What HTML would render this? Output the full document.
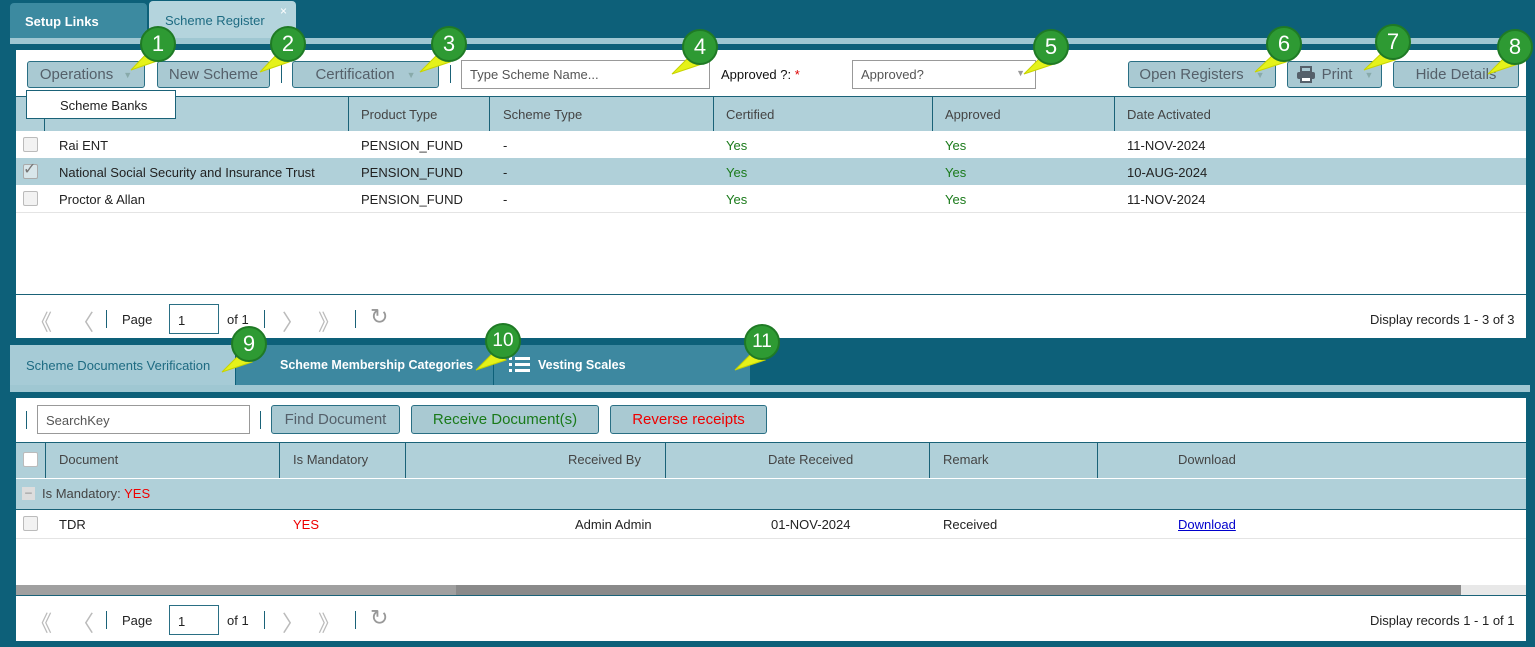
<!DOCTYPE html>
<html><head><meta charset="utf-8">
<style>
*{box-sizing:border-box;margin:0;padding:0}
body{width:1535px;height:647px;overflow:hidden;background:#0d6079;font-family:"Liberation Sans",sans-serif;font-size:13px;color:#222;position:relative}
.a{position:absolute}
.btn{position:absolute;border:1px solid #2a6f84;border-radius:3px;background:#a9c9d2;color:#55606a;font-size:15px;display:flex;align-items:center;justify-content:center;height:27px}
.hd{position:absolute;color:#444;font-size:13px}
.vl{position:absolute;width:1px;background:#1a6278}
.mk{position:absolute;width:36px;height:36px;border-radius:50%;background:#2e9a33;border:2px solid #1f7a25;color:#fff;font-size:22px;display:flex;align-items:center;justify-content:center;font-family:"Liberation Sans",sans-serif}
.cb{position:absolute;width:15px;height:15px;border:1px solid #bbb;border-radius:2px;background:#f2f2f2}
.sep{position:absolute;width:1px;height:18px;background:#1a6278}
.pg{position:absolute;color:#bbb;font-size:22px}
</style></head><body>
<div class="a" style="left:10px;top:3px;width:137px;height:36px;background:#3c8aa0;border-radius:4px 4px 0 0;color:#fff;font-weight:bold;font-size:13px;padding:11px 0 0 15px">Setup Links</div>
<div class="a" style="left:149px;top:1px;width:147px;height:38px;background:#b4d4dd;border-radius:4px 4px 0 0;color:#1e6b82;font-size:13px;padding:12px 0 0 16px">Scheme Register</div>
<div class="a" style="left:280px;top:4px;color:#fff;font-size:12px">×</div>
<div class="a" style="left:10px;top:38px;width:1520px;height:6px;background:#9fc7d2"></div>
<div class="a" style="left:10px;top:44px;width:1521px;height:299px;background:#0d6079"></div>
<div class="a" style="left:16px;top:50px;width:1510px;height:288px;background:#fff"></div>
<div class="btn" style="left:27px;top:61px;width:118px">Operations <span style="font-size:9px;margin-left:10px;color:#8aa">▼</span></div>
<div class="btn" style="left:157px;top:61px;width:113px">New Scheme</div>
<div class="sep" style="left:281px;top:65px"></div>
<div class="btn" style="left:292px;top:61px;width:147px">Certification <span style="font-size:9px;margin-left:12px;color:#8aa">▼</span></div>
<div class="sep" style="left:450px;top:65px"></div>
<div class="a" style="left:461px;top:60px;width:249px;height:29px;border:1px solid #999;font-size:13px;color:#555;padding:6px 8px">Type Scheme Name...</div>
<div class="a" style="left:721px;top:67px;font-size:13px;color:#111">Approved ?: <span style="color:#d00">*</span></div>
<div class="a" style="left:852px;top:60px;width:184px;height:29px;border:1px solid #999;font-size:13px;color:#555;padding:6px 8px">Approved?<span style="position:absolute;right:10px;top:7px;font-size:9px;color:#999">▼</span></div>
<div class="btn" style="left:1128px;top:61px;width:148px">Open Registers <span style="font-size:9px;margin-left:12px;color:#8aa">▼</span></div>
<div class="btn" style="left:1287px;top:61px;width:95px"><svg width="20" height="17" viewBox="0 0 20 17" style="margin-right:6px"><rect x="5" y="1" width="10" height="5" fill="none" stroke="#55606a" stroke-width="2"/><rect x="1" y="6" width="18" height="7" rx="2" fill="#55606a"/><rect x="5" y="11" width="10" height="5" fill="#fff" stroke="#55606a" stroke-width="2"/></svg>Print <span style="font-size:9px;margin-left:12px;color:#8aa">▼</span></div>
<div class="btn" style="left:1393px;top:61px;width:126px">Hide Details</div>
<div class="a" style="left:16px;top:96px;width:1510px;height:35px;background:#b0d0d9;border-top:1px solid #1a6278"></div>
<div class="vl" style="left:44px;top:97px;height:34px"></div>
<div class="vl" style="left:348px;top:97px;height:34px"></div>
<div class="vl" style="left:489px;top:97px;height:34px"></div>
<div class="vl" style="left:713px;top:97px;height:34px"></div>
<div class="vl" style="left:932px;top:97px;height:34px"></div>
<div class="vl" style="left:1114px;top:97px;height:34px"></div>
<div class="hd" style="left:361px;top:107px">Product Type</div>
<div class="hd" style="left:503px;top:107px">Scheme Type</div>
<div class="hd" style="left:726px;top:107px">Certified</div>
<div class="hd" style="left:945px;top:107px">Approved</div>
<div class="hd" style="left:1127px;top:107px">Date Activated</div>
<div class="a" style="left:26px;top:90px;width:150px;height:29px;background:#fff;border:1px solid #1a6278;font-size:13px;padding:7px 0 0 33px">Scheme Banks</div>
<div class="a" style="left:16px;top:158px;width:1510px;height:27px;background:#b0d0d9"></div>
<div class="a" style="left:16px;top:212px;width:1510px;height:1px;background:#e4e4e4"></div>
<div class="cb" style="left:23px;top:137px"></div><div class="cb" style="left:23px;top:164px;background:#d8e6ea;border-color:#aaa"></div><div class="a" style="left:23px;top:159px;font-size:16px;color:#777">✓</div><div class="cb" style="left:23px;top:191px"></div>
<div class="a" style="left:59px;top:138px">Rai ENT</div>
<div class="a" style="left:59px;top:165px">National Social Security and Insurance Trust</div>
<div class="a" style="left:59px;top:192px">Proctor &amp; Allan</div>
<div class="a" style="left:361px;top:138px">PENSION_FUND</div><div class="a" style="left:361px;top:165px">PENSION_FUND</div><div class="a" style="left:361px;top:192px">PENSION_FUND</div>
<div class="a" style="left:503px;top:138px">-</div><div class="a" style="left:503px;top:165px">-</div><div class="a" style="left:503px;top:192px">-</div>
<div class="a" style="left:726px;top:138px;color:#1a7a1a">Yes</div><div class="a" style="left:726px;top:165px;color:#1a7a1a">Yes</div><div class="a" style="left:726px;top:192px;color:#1a7a1a">Yes</div>
<div class="a" style="left:945px;top:138px;color:#1a7a1a">Yes</div><div class="a" style="left:945px;top:165px;color:#1a7a1a">Yes</div><div class="a" style="left:945px;top:192px;color:#1a7a1a">Yes</div>
<div class="a" style="left:1127px;top:138px">11-NOV-2024</div><div class="a" style="left:1127px;top:165px">10-AUG-2024</div><div class="a" style="left:1127px;top:192px">11-NOV-2024</div>
<div class="a" style="left:16px;top:294px;width:1510px;height:1px;background:#1a6278"></div>
<div class="pg" style="left:30px;top:305px">《</div><div class="pg" style="left:72px;top:305px">〈</div>
<div class="sep" style="left:106px;top:310px"></div>
<div class="a" style="left:122px;top:312px">Page</div>
<div class="a" style="left:169px;top:304px;width:50px;height:30px;border:1px solid #2a6f84;padding:8px 0 0 8px">1</div>
<div class="a" style="left:227px;top:312px">of 1</div>
<div class="sep" style="left:264px;top:310px"></div>
<div class="pg" style="left:282px;top:305px">〉</div><div class="pg" style="left:318px;top:305px">》</div>
<div class="sep" style="left:355px;top:310px"></div>
<div class="pg" style="left:370px;top:304px;color:#999">↻</div>
<div class="a" style="left:1370px;top:312px">Display records 1 - 3 of 3</div>
<div class="a" style="left:10px;top:345px;width:225px;height:40px;background:#a6cbd6;color:#1e6b82;font-size:13px;padding:13px 0 0 16px">Scheme Documents Verification</div>
<div class="a" style="left:235px;top:345px;width:258px;height:40px;background:#3d88a0;border-left:1px solid #0d6079;color:#fff;font-weight:bold;font-size:12.5px;padding:13px 0 0 44px">Scheme Membership Categories</div>
<div class="a" style="left:493px;top:345px;width:257px;height:40px;background:#3d88a0;border-left:1px solid #0d6079;color:#fff;font-weight:bold;font-size:12.5px;padding:13px 0 0 44px">Vesting Scales</div>
<svg class="a" style="left:509px;top:356px" width="22" height="18"><g fill="#fff"><rect x="0" y="1" width="3" height="3"/><rect x="0" y="7" width="3" height="3"/><rect x="0" y="13" width="3" height="3"/><rect x="6" y="1" width="15" height="3"/><rect x="6" y="7" width="15" height="3"/><rect x="6" y="13" width="15" height="3"/></g></svg>
<div class="a" style="left:10px;top:385px;width:1520px;height:7px;background:#9fc7d2"></div>
<div class="a" style="left:16px;top:398px;width:1510px;height:243px;background:#fff"></div>
<div class="sep" style="left:26px;top:411px"></div>
<div class="a" style="left:37px;top:405px;width:213px;height:29px;border:1px solid #999;font-size:13px;color:#555;padding:7px 8px">SearchKey</div>
<div class="sep" style="left:260px;top:411px"></div>
<div class="btn" style="left:271px;top:405px;width:129px;height:29px">Find Document</div>
<div class="btn" style="left:411px;top:405px;width:188px;height:29px;color:#1a7a1a">Receive Document(s)</div>
<div class="btn" style="left:610px;top:405px;width:157px;height:29px;color:#e00">Reverse receipts</div>
<div class="a" style="left:16px;top:442px;width:1510px;height:68px;background:#b0d0d9;border-top:1px solid #1a6278;border-bottom:1px solid #1a6278"></div>
<div class="a" style="left:16px;top:478px;width:1510px;height:1px;background:#fff"></div>
<div class="vl" style="left:45px;top:443px;height:35px"></div>
<div class="vl" style="left:279px;top:443px;height:35px"></div>
<div class="vl" style="left:405px;top:443px;height:35px"></div>
<div class="vl" style="left:665px;top:443px;height:35px"></div>
<div class="vl" style="left:929px;top:443px;height:35px"></div>
<div class="vl" style="left:1097px;top:443px;height:35px"></div>
<div class="cb" style="left:23px;top:452px;background:#fff"></div>
<div class="hd" style="left:59px;top:452px">Document</div>
<div class="hd" style="left:293px;top:452px">Is Mandatory</div>
<div class="hd" style="left:568px;top:452px">Received By</div>
<div class="hd" style="left:768px;top:452px">Date Received</div>
<div class="hd" style="left:943px;top:452px">Remark</div>
<div class="hd" style="left:1178px;top:452px">Download</div>
<div class="a" style="left:22px;top:487px;width:13px;height:13px;background:#ddd;color:#888;font-size:12px;line-height:11px;text-align:center">–</div>
<div class="a" style="left:42px;top:486px;color:#444">Is Mandatory: <span style="color:#e00">YES</span></div>
<div class="cb" style="left:23px;top:516px"></div>
<div class="a" style="left:59px;top:517px">TDR</div>
<div class="a" style="left:293px;top:517px;color:#e00">YES</div>
<div class="a" style="left:575px;top:517px">Admin Admin</div>
<div class="a" style="left:771px;top:517px">01-NOV-2024</div>
<div class="a" style="left:943px;top:517px">Received</div>
<div class="a" style="left:1178px;top:517px;color:#00c;text-decoration:underline">Download</div>
<div class="a" style="left:16px;top:538px;width:1510px;height:1px;background:#e4e4e4"></div>
<div class="a" style="left:16px;top:585px;width:1445px;height:10px;background:#8a8a8a"></div>
<div class="a" style="left:16px;top:585px;width:440px;height:10px;background:#a0a0a0"></div>
<div class="a" style="left:1461px;top:585px;width:65px;height:10px;background:#e8e8e8"></div>
<div class="a" style="left:16px;top:595px;width:1510px;height:1px;background:#1a6278"></div>
<div class="pg" style="left:30px;top:606px">《</div><div class="pg" style="left:72px;top:606px">〈</div>
<div class="sep" style="left:106px;top:611px"></div>
<div class="a" style="left:122px;top:613px">Page</div>
<div class="a" style="left:169px;top:605px;width:50px;height:30px;border:1px solid #2a6f84;padding:8px 0 0 8px">1</div>
<div class="a" style="left:227px;top:613px">of 1</div>
<div class="sep" style="left:264px;top:611px"></div>
<div class="pg" style="left:282px;top:606px">〉</div><div class="pg" style="left:318px;top:606px">》</div>
<div class="sep" style="left:355px;top:611px"></div>
<div class="pg" style="left:370px;top:605px;color:#999">↻</div>
<div class="a" style="left:1370px;top:613px">Display records 1 - 1 of 1</div>
<svg class="a" style="left:0;top:0" width="1535" height="647">
<g fill="#e5f21a" stroke="#c8d400" stroke-width="1">
<polygon points="131,70 150,50 160,60"/>
<polygon points="260,72 279,52 289,62"/>
<polygon points="420,72 440,52 450,62"/>
<polygon points="672,74 692,54 702,64"/>
<polygon points="1024,74 1044,54 1054,64"/>
<polygon points="1255,72 1276,52 1286,62"/>
<polygon points="1364,70 1385,50 1395,60"/>
<polygon points="1488,74 1508,54 1518,64"/>
<polygon points="222,372 242,352 252,362"/>
<polygon points="476,370 496,350 506,360"/>
<polygon points="735,370 755,350 765,360"/>
</g></svg>
<div class="mk" style="left:140px;top:26px">1</div>
<div class="mk" style="left:270px;top:26px">2</div>
<div class="mk" style="left:431px;top:26px">3</div>
<div class="mk" style="left:682px;top:29px">4</div>
<div class="mk" style="left:1033px;top:29px">5</div>
<div class="mk" style="left:1266px;top:26px">6</div>
<div class="mk" style="left:1375px;top:24px">7</div>
<div class="mk" style="left:1497px;top:29px">8</div>
<div class="mk" style="left:231px;top:326px">9</div>
<div class="mk" style="left:485px;top:323px;font-size:19px">10</div>
<div class="mk" style="left:744px;top:324px;font-size:19px">11</div>
</body></html>
